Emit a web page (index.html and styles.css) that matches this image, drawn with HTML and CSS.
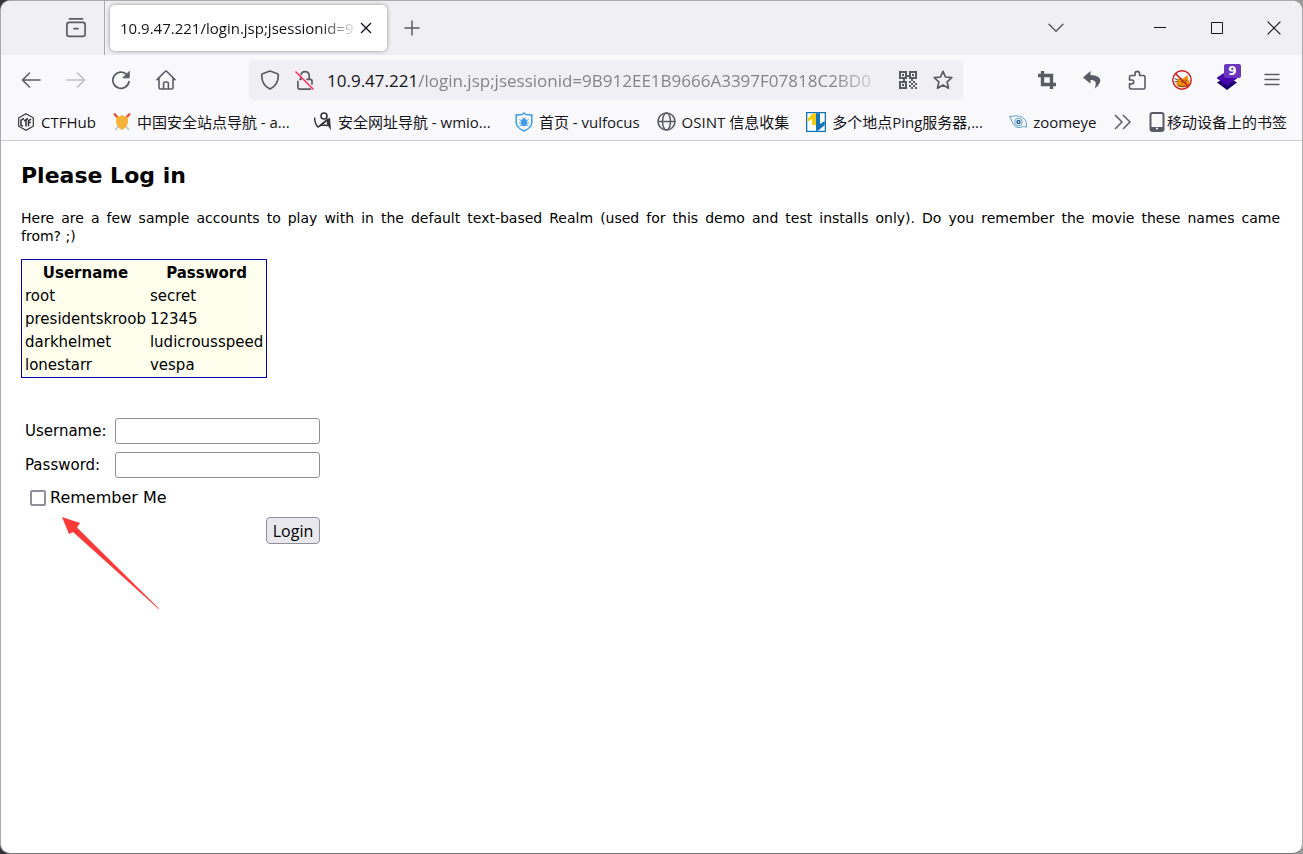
FILE: index.html
```html
<!DOCTYPE html>
<html lang="zh-CN">
<head>
  <meta charset="UTF-8" />
  <title>10.9.47.221/login.jsp</title>
  <link rel="stylesheet" href="styles.css">
</head>
<body>
  <div class="window">

    <header class="titlebar">
      <button class="icon-btn view-btn" aria-label="Firefox View">
        <svg width="22" height="22" viewBox="0 0 22 22" fill="none" stroke="#5b5b66" stroke-width="1.7" stroke-linecap="round"><path d="M4.5 1.9h13"/><rect x="1.9" y="5.4" width="18.2" height="14" rx="2.4"/><path d="M9 11.6h4"/></svg>
      </button>
      <div class="tab">
        <span class="tab-title">10.9.47.221/login.jsp;jsessionid=9</span>
        <button class="icon-btn tab-close" aria-label="Close tab">
          <svg width="12" height="12" viewBox="0 0 12 12" stroke="#15141a" stroke-width="1.4"><path d="M1 1l10 10M11 1L1 11"/></svg>
        </button>
      </div>
      <button class="icon-btn new-tab" aria-label="New tab">
        <svg width="16" height="16" viewBox="0 0 16 16" stroke="#5b5b66" stroke-width="1.5"><path d="M8 .5v15M.5 8h15"/></svg>
      </button>
      <button class="icon-btn tabs-menu" aria-label="List all tabs">
        <svg width="16" height="10" viewBox="0 0 16 10" fill="none" stroke="#5b5b66" stroke-width="1.5" stroke-linecap="round" stroke-linejoin="round"><path d="M1 1.2l7 7 7-7"/></svg>
      </button>
      <div class="window-controls">
        <button class="icon-btn" aria-label="Minimize"><svg width="14" height="14" viewBox="0 0 14 14" stroke="#15141a"><path d="M1 6.5h12"/></svg></button>
        <button class="icon-btn" aria-label="Maximize"><svg width="14" height="14" viewBox="0 0 14 14" fill="none" stroke="#15141a"><path d="M1.5 1.5h11v11h-11z"/></svg></button>
        <button class="icon-btn" aria-label="Close"><svg width="14" height="14" viewBox="0 0 14 14" stroke="#15141a" stroke-width="1.2"><path d="M.6.6l12.8 12.8M13.4.6L.6 13.4"/></svg></button>
      </div>
    </header>

    <nav class="toolbar">
      <div class="tools">
        <button class="icon-btn" aria-label="Back"><svg width="20" height="18" viewBox="0 0 20 18" fill="none" stroke="#5b5b66" stroke-width="1.6" stroke-linecap="round" stroke-linejoin="round"><path d="M19 9H1.5M8.5 2l-7 7 7 7"/></svg></button>
        <button class="icon-btn" aria-label="Forward" disabled><svg width="20" height="18" viewBox="0 0 20 18" fill="none" stroke="#bdbdc3" stroke-width="1.6" stroke-linecap="round" stroke-linejoin="round"><path d="M1 9h17.5M11.5 2l7 7-7 7"/></svg></button>
        <button class="icon-btn" aria-label="Reload"><svg width="20" height="20" viewBox="0 0 20 20" fill="none" stroke="#5b5b66" stroke-width="1.7" stroke-linecap="round"><path d="M18 11.5A8.1 8.1 0 1 1 15.8 4.6"/><path d="M18.2 1.8v6h-6z" fill="#5b5b66" stroke-width="1" stroke-linejoin="round"/></svg></button>
        <button class="icon-btn" aria-label="Home"><svg width="20" height="20" viewBox="0 0 20 20" fill="none" stroke="#5b5b66" stroke-width="1.6" stroke-linecap="round" stroke-linejoin="round"><path d="M1 9.6L9.2 1.5q.8-.7 1.6 0L19 9.6M3 8.5v8.9q0 1.6 1.6 1.6h10.8q1.6 0 1.6-1.6V8.5M7.6 18.5v-5q0-1.5 1.5-1.5h1.8q1.5 0 1.5 1.5v5"/></svg></button>
      </div>

      <div class="urlbar">
        <svg class="url-icon" width="20" height="20" viewBox="0 0 20 20" fill="none" stroke="#5b5b66" stroke-width="1.7" stroke-linejoin="round"><path d="M10 1L17.5 3.7q.8.3.8 1.2C18.3 12 15.5 16.5 10 19 4.5 16.5 1.7 12 1.7 4.9q0-.9.8-1.2z"/></svg>
        <svg class="url-icon lock" width="20" height="20" viewBox="0 0 20 20" fill="none" stroke="#5b5b66" stroke-width="1.7" stroke-linecap="round"><path d="M6 4.5a4.2 4.2 0 0 1 8.2 1.3v3.5M6 7v2.3M12 9.3h3.3q1.7 0 1.7 1.7v3M2.9 11.3v6.2q0 1.6 1.6 1.6h11M5 9.3h1"/><path d="M1 2l17 17" stroke="#f9315f" stroke-width="1.6"/></svg>
        <label class="url-host" for="url">10.9.47.221</label>
        <input class="url-input" id="url" type="text" value="/login.jsp;jsessionid=9B912EE1B9666A3397F07818C2BD0">
        <button class="icon-btn url-action" aria-label="QR code">
          <svg width="18" height="18" viewBox="0 0 18 18" fill="#5b5b66"><path d="M0 0h8v8H0zm2 2v4h4V2zM10 0h8v8h-8zm2 2v4h4V2zM0 10h8v8H0zm2 2v4h4v-4z" fill-rule="evenodd"/><path d="M3 3h2v2H3zM13 3h2v2h-2zM3 13h2v2H3zM8 4h2v2H8zM4 8h2v2H4zM12 8h2v2h-2zM10 10h2v2h-2zM12 12h2v2h-2zM14 10h2v2h-2zM16 12h2v2h-2zM10 14h2v2h-2zM14 14h2v2h-2zM12 16h2v2h-2zM16 16h2v2h-2z"/></svg>
        </button>
        <button class="icon-btn url-action" aria-label="Bookmark this page">
          <svg width="20" height="20" viewBox="0 0 20 20" fill="none" stroke="#5b5b66" stroke-width="1.7" stroke-linejoin="round"><path d="M10 1.3l2.5 5.7 6.3.6-4.7 4.2 1.4 6.4-5.5-3.3-5.5 3.3 1.4-6.4L1.2 7.6 7.5 7z"/></svg>
        </button>
      </div>

      <div class="tools">
        <button class="icon-btn" aria-label="Screenshot"><svg width="18" height="18" viewBox="0 0 18 18" fill="none" stroke="#5b5b66" stroke-width="3.4"><path d="M4.5 0v13.5H18M0 4.5h13.5V18"/></svg></button>
        <button class="icon-btn" aria-label="Undo"><svg width="18" height="18" viewBox="0 0 18 18" fill="#5b5b66"><path d="M7.5 0L0 6.5l7.5 6.3V9c4.8-.2 6.6 2 4.2 8.5 8.8-6.6 7.2-13.3-4.2-13.6z"/></svg></button>
        <button class="icon-btn" aria-label="Extensions"><svg width="20" height="20" viewBox="0 0 20 20" fill="none" stroke="#5b5b66" stroke-width="1.6" stroke-linejoin="round"><path d="M2.5 10V7q0-1.5 1.5-1.5h4V3.7a2.3 2.3 0 0 1 4.6 0v1.8h3.9q1.5 0 1.5 1.5v10.5q0 1.5-1.5 1.5H4q-1.5 0-1.5-1.5v-3.6h2.3a1.95 1.95 0 0 0 0-3.9z"/></svg></button>
        <button class="icon-btn" aria-label="Proxy off"><svg width="20" height="20" viewBox="0 0 20 20" fill="none"><path d="M5 16q-1.5-5 1.5-7.5L8.5 8l2 1L15.5 5l.5 4q3 4 0 7-5 2.5-11 0z" fill="#ed8c0c"/><path d="M2.5 8.5L6 10M2.5 12l3-.5M9 11.5l2 1M14.5 10l-1 1.5" stroke="#4c4c4c"/><path d="M6 15.5q5 2 9 .5" stroke="#8a4b08" stroke-width="1.2"/><circle cx="10" cy="10" r="9.2" stroke="#cf1717" stroke-width="1.4"/><path d="M3.5 3.5l13 13" stroke="#cf1717" stroke-width="1.5"/></svg></button>
        <button class="icon-btn badge-btn" aria-label="Wappalyzer"><svg width="20" height="20" viewBox="0 0 20 20"><path d="M0 12.5l10-6 10 6-10 7.5z" fill="#1c0070"/><path d="M0 7.5L10 1l10 6.5v1L10 15.5 0 8.5z" fill="#4608ad"/></svg><span class="badge">9</span></button>
        <button class="icon-btn" aria-label="Menu"><svg width="16" height="14" viewBox="0 0 16 14" stroke="#5b5b66" stroke-width="1.4" stroke-linecap="round"><path d="M1 1.5h14M1 6.5h14M1 11.5h14"/></svg></button>
      </div>
    </nav>

    <nav class="bookmarks">
      <a href="#" class="bookmark">
        <svg width="18" height="18" viewBox="0 0 18 18" fill="none" stroke="#333" stroke-width="1.2"><path d="M9 .8l7.3 4v8.4L9 17.2l-7.3-4V4.8z"/><path d="M7 5.5L4 7.2v5l2 1M7 7.8l4-2.3M9 7v6.5M14 6.2l-2.5 1.5v5.5M11.5 10l2.3-1.2" stroke-width="1.5"/></svg>
        <span>CTFHub</span>
      </a>
      <a href="#" class="bookmark">
        <svg width="18" height="18" viewBox="0 0 18 18"><path d="M3 3l13 14M15 3L2 17" stroke="#b8bcc4" stroke-width="1.5"/><path d="M0 1l2-1 5 5-2 2zM18 1l-2-1-5 5 2 2z" fill="#e6533c"/><path d="M3 4q4 0 6-2 2 2 6 2-.5 2 0 4 0 6-6 9-6-3-6-9 .5-2 0-4z" fill="#f6b33c"/></svg>
        <span class="long">中国安全站点导航 - a...</span>
      </a>
      <a href="#" class="bookmark">
        <svg width="18" height="19" viewBox="0 0 18 19" fill="none" stroke="#333"><circle cx="10" cy="4" r="3" stroke-width="1.6"/><path d="M.5 5.5q.5 7 3.5 9.5 3-1 9.5-7.5" stroke-width="1.5"/><path d="M12 8.5L6.5 13l9 .5" stroke-width="1.5"/><path d="M12.5 7L16 6l1 12.5L13 12z" fill="#333" stroke="none"/></svg>
        <span class="long">安全网址导航 - wmio...</span>
      </a>
      <a href="#" class="bookmark">
        <svg width="18" height="20" viewBox="0 0 18 20" fill="none" stroke="#3d9bea"><path d="M9 1l2 1.5 5.8.5v8q-.8 5-7.8 8-7-3-7.8-8V3L7 2.5z" stroke-width="1.5"/><ellipse cx="9" cy="10.5" rx="2.5" ry="3.5" fill="#3d9bea"/><path d="M4.5 7.5L7 9M13.5 7.5L11 9M4 11h3M14 11h-3M4.5 14L7 12.5M13.5 14L11 12.5M7.5 5.5L9 7l1.5-1.5"/></svg>
        <span>首页 - vulfocus</span>
      </a>
      <a href="#" class="bookmark">
        <svg width="19" height="19" viewBox="0 0 19 19" fill="none" stroke="#5b5b66" stroke-width="1.6"><circle cx="9.5" cy="9.5" r="8.5"/><ellipse cx="9.5" cy="9.5" rx="4" ry="8.5"/><path d="M1 9.5h17"/></svg>
        <span>OSINT 信息收集</span>
      </a>
      <a href="#" class="bookmark">
        <svg width="20" height="20" viewBox="0 0 20 20"><path d="M0 0h20v20H0z" fill="#1173ba"/><path d="M1.3 1.3h17.4v17.4H1.3z" fill="#fff"/><path d="M1.3 7L7 1.3h3V13H6V7L1.3 10z" fill="#f8cb13"/><path d="M10 1.3h4V12l4.7-3v4L12 18.7h-2z" fill="#1173ba"/></svg>
        <span class="long">多个地点Ping服务器,...</span>
      </a>
      <a href="#" class="bookmark">
        <svg width="18" height="14" viewBox="0 0 18 14" fill="none" stroke="#5c9fce"><path d="M.5 1.5Q13-1 17 6l.5 6-3-.5Q5 15.5 2.5 5z"/><circle cx="9.5" cy="7" r="3.8"/><circle cx="9.5" cy="7" r="1.5" stroke="#2e6395" stroke-width="1.5"/></svg>
        <span>zoomeye</span>
      </a>
      <button class="icon-btn overflow" aria-label="More bookmarks"><svg width="17" height="16" viewBox="0 0 17 16" fill="none" stroke="#5b5b66" stroke-width="1.5"><path d="M1 1l7 7-7 7M9 1l7 7-7 7"/></svg></button>
      <a href="#" class="bookmark mobile">
        <svg width="16" height="20" viewBox="0 0 16 20" fill="none" stroke="#5b5b66" stroke-width="2"><rect x="1.5" y="1" width="13" height="18" rx="2"/><path d="M2 16.5h12" stroke-width="3"/><path d="M7 16.5h2" stroke="#fff" stroke-width="1.5"/></svg>
        <span>移动设备上的书签</span>
      </a>
    </nav>

    <main class="page">
      <h2>Please Log in</h2>
      <p class="intro"><span class="intro-line">Here are a few sample accounts to play with in the default text-based Realm (used for this demo and test installs only). Do you remember the movie these names came</span> from? ;)</p>

      <table class="sample">
        <thead>
          <tr><th>Username</th><th>Password</th></tr>
        </thead>
        <tbody>
          <tr><td>root</td><td>secret</td></tr>
          <tr><td>presidentskroob</td><td>12345</td></tr>
          <tr><td>darkhelmet</td><td>ludicrousspeed</td></tr>
          <tr><td>lonestarr</td><td>vespa</td></tr>
        </tbody>
      </table>

      <form class="login">
        <label for="username">Username:</label>
        <input class="field" type="text" id="username">
        <label for="password">Password:</label>
        <input class="field" type="password" id="password">
        <div class="remember">
          <input type="checkbox" id="remember">
          <label for="remember">Remember Me</label>
        </div>
        <button class="submit" type="button">Login</button>
        <svg class="arrow" width="98" height="93" viewBox="0 0 98 93" fill="#fc3a3a"><path d="M0 0l18 6-3 4.5L97 91.500l-.5.5L11 15l-4 2z"/></svg>
      </form>
    </main>

  </div>
</body>
</html>
```
FILE: styles.css
```css
html {
  background: linear-gradient(to right, #34343c 42%, #999 42%);
}

body {
  margin: 0;
  font-family: 'Open Sans', 'Noto Sans CJK SC', sans-serif;
  font-size: 15px;
  color: #15141a;
}

* {
  box-sizing: border-box;
}

.window {
  display: flex;
  flex-direction: column;
  min-height: 100vh;
  border: 1px solid #aaa;
  border-bottom-color: #77777c;
  border-radius: 10px;
  background: #fff;
  overflow: hidden;
}

.icon-btn {
  display: flex;
  align-items: center;
  justify-content: center;
  padding: 0;
  border: none;
  background: none;
}

/* tab strip */
.titlebar {
  display: flex;
  align-items: center;
  height: 54px;
  background: #f0eff4;
}

.view-btn {
  align-self: stretch;
  width: 104px;
  padding-left: 46px;
  border-right: 1px solid #aaa;
}

.tab {
  display: flex;
  align-items: center;
  width: 277px;
  height: 46px;
  margin-left: 5px;
  padding: 0 14px 0 10px;
  border-radius: 5px;
  background: #fff;
  box-shadow: 0 0 4px rgba(0, 0, 0, 0.4);
}

.tab-title {
  flex: 1;
  white-space: nowrap;
  mask-image: linear-gradient(to left, transparent, #000 40px);
}

.tab-close {
  width: 14px;
}

.new-tab {
  width: 50px;
}

.tabs-menu {
  width: 40px;
  margin-left: auto;
}

.window-controls {
  display: flex;
  margin-left: 55px;
}

.window-controls .icon-btn {
  width: 57px;
}

/* navigation */
.toolbar {
  display: flex;
  align-items: center;
  gap: 61px;
  height: 50px;
  padding: 0 8px 0 7px;
  background: #f9f9fb;
}

.tools {
  display: flex;
}

.tools .icon-btn {
  width: 45px;
  height: 40px;
}

.urlbar {
  display: flex;
  flex: 1;
  align-items: center;
  min-width: 0;
  height: 40px;
  padding: 0 10px 0 11px;
  border-radius: 5px;
  background: #f0eff4;
  font-size: 17px;
}

.url-icon {
  flex: none;
}

.lock {
  margin: 0 12px 0 15px;
}

.url-input {
  flex: 1;
  min-width: 0;
  padding: 0;
  border: none;
  background: none;
  color: #85848b;
  font: inherit;
  mask-image: linear-gradient(to left, transparent, #000 56px);
}

.url-action {
  width: 20px;
  margin-left: 10px;
}

.url-action + .url-action {
  margin-left: 15px;
}

.badge-btn {
  position: relative;
}

.badge {
  position: absolute;
  top: 4px;
  right: 8px;
  width: 17px;
  border-radius: 2px;
  background: #6b35bd;
  color: #fff;
  font: bold 12px/14px 'DejaVu Sans', sans-serif;
}

/* bookmarks */
.bookmarks {
  display: flex;
  align-items: center;
  height: 36px;
  padding: 0 15px 2px 16px;
  border-bottom: 1px solid #ccc;
  background: #f9f9fb;
  white-space: nowrap;
}

.bookmark {
  display: flex;
  align-items: center;
  gap: 6px;
  margin-right: 17px;
  color: #15141a;
  text-decoration: none;
}

.bookmark svg {
  flex: none;
}

.long {
  width: 160px;
}

.overflow {
  width: 17px;
  margin-left: auto;
}

.mobile {
  gap: 2px;
  margin: 0 0 0 18px;
}

/* login page */
.page {
  padding: 20px 22px 20px 20px;
  color: #000;
  font: 15px/18px Verdana, 'DejaVu Sans', sans-serif;
}

.page h2 {
  margin: 0 0 18px;
  font-size: 22px;
  line-height: 30px;
}

.intro {
  margin: 0 0 14px;
  font-size: 14px;
}

.intro-line {
  display: block;
  text-align: justify;
  text-align-last: justify;
}

.sample {
  border: 1px solid #0000b0;
  border-spacing: 2px;
  background: #ffffee;
}

.sample th,
.sample td {
  padding: 1px;
  height: 21px;
}

.sample td {
  text-align: left;
}

.login {
  position: relative;
  display: grid;
  grid-template-columns: 82px 205px;
  gap: 8px;
  width: max-content;
  margin-top: 40px;
  padding-left: 4px;
  align-items: center;
}

.field {
  width: 100%;
  height: 26px;
  border: 1px solid #8f8f9d;
  border-radius: 3px;
  background: #fff;
}

.remember {
  display: flex;
  grid-column: 1 / 3;
  align-items: center;
  gap: 4px;
  height: 23px;
  padding-left: 5px;
  font-size: 16px;
}

.remember input {
  appearance: none;
  width: 16px;
  height: 16px;
  margin: 0;
  border: 2px solid #8f8f9d;
  border-radius: 2px;
  background: #fff;
}

.submit {
  grid-column: 2;
  justify-self: end;
  width: 54px;
  height: 27px;
  padding: 0;
  border: 1px solid #8f8f9d;
  border-radius: 4px;
  background: #e9e9ed;
  color: #000;
  font: 16px 'Open Sans', sans-serif;
}

.arrow {
  position: absolute;
  top: 99px;
  left: 41px;
}
```
